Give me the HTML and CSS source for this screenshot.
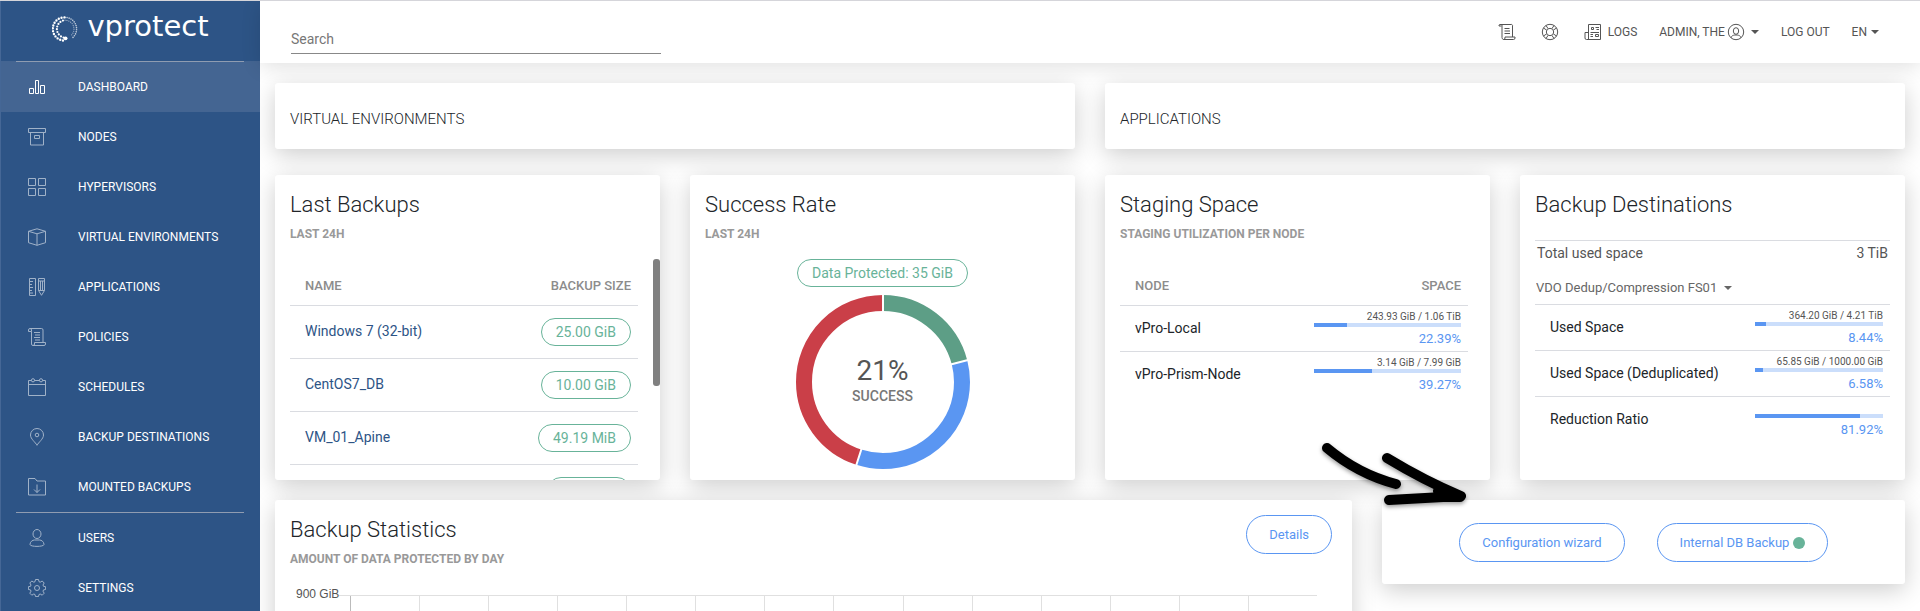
FILE: index.html
```html
<!DOCTYPE html>
<html lang="en">
<head>
<meta charset="utf-8">
<title>vProtect Dashboard</title>
<link rel="stylesheet" href="styles.css">
</head>
<body>
<div class="app">
  <aside class="sidebar">
    <a class="brand" href="#">
      <svg class="brand-mark" viewBox="0 0 26 26" aria-hidden="true">
        <g fill="none" stroke="#fff" stroke-linecap="round">
          <path d="M11 24.500A11.600 11.600 0 0 1 13 1.400" stroke-width="2.400" stroke-dasharray="0 2.900"/>
          <path d="M13 1.400A11.600 11.600 0 0 1 19.500 22.600" stroke-width="1.600" stroke-dasharray="0 2.100" opacity=".7"/>
          <path d="M11.500 21.500A8.800 8.800 0 0 1 13 4.200" stroke-width="2.200" stroke-dasharray="0 2.800"/>
          <path d="M13 4.200A8.800 8.800 0 0 1 18.500 20" stroke-width="1.200" stroke-dasharray="0 2" opacity=".6"/>
          <path d="M13.500 22.300h.1" stroke-width="3.800"/>
        </g>
      </svg>
      <span class="brand-name">vprotect</span>
    </a>
    <nav>
      <ul class="menu">
        <li class="menu-item group-start active"><a href="#">
          <svg class="icon" viewBox="0 0 18 18"><path d="M1.500 10.500h4v5h-4zM7.500 2.500h3v13h-3zM12.500 7.500h4v8h-4z"/></svg>DASHBOARD</a></li>
        <li class="menu-item"><a href="#">
          <svg class="icon" viewBox="0 0 18 18"><path d="M.5.500h17v4H.5zM2.500 4.500v12.500h13V4.500M6.500 7.500h5v3h-5z"/></svg>NODES</a></li>
        <li class="menu-item"><a href="#">
          <svg class="icon" viewBox="0 0 18 18"><path d="M.5.500h7v7h-7zM10.500.500h7v7h-7zM.5 10.500h7v7h-7zM10.500 10.500h7v7h-7z"/></svg>HYPERVISORS</a></li>
        <li class="menu-item"><a href="#">
          <svg class="icon" viewBox="0 0 18 18"><path d="M9 .8l8.500 2.500v11.400L9 17.300.5 14.700V3.300zM.5 3.300L9 5.800l8.500-2.500M9 5.800v11.500"/></svg>VIRTUAL ENVIRONMENTS</a></li>
        <li class="menu-item"><a href="#">
          <svg class="icon" viewBox="0 0 18 18"><path d="M1.500.500h6v17h-6zM2 3.500h3M2 6.500h2M2 9.500h3M2 12.500h2M2 15h3M10.500.500h6v12l-3 4.800-3-4.800zM10.500 3h6M12.500 3v9.500M14.500 3v9.500M10.500 12.500h6"/></svg>APPLICATIONS</a></li>
        <li class="menu-item"><a href="#">
          <svg class="icon" viewBox="0 0 18 18"><path d="M2 .500h11.500a1.500 1.500 0 0 1 1.500 1.500v12.500M2 .500A1.500 1.500 0 0 0 .5 2v1.500h3V2A1.500 1.500 0 0 0 2 .500M3.500 3.500V16A1.500 1.500 0 0 0 5 17.500h11a1.500 1.500 0 0 0 1.500-1.500v-1.500H6.500V16A1.500 1.500 0 0 1 5 17.500M6 4.500h6M7 7h5M6 9.500h6M7 12h5"/></svg>POLICIES</a></li>
        <li class="menu-item"><a href="#">
          <svg class="icon" viewBox="0 0 18 18"><path d="M3.500 2.500h-3v15h17v-15h-3M6.500 2.500h5M.5 6.500h17"/><circle cx="5" cy="2.300" r="1.600"/><circle cx="13" cy="2.300" r="1.600"/></svg>SCHEDULES</a></li>
        <li class="menu-item"><a href="#">
          <svg class="icon" viewBox="0 0 18 18"><path d="M9 17.300C7.500 14.300 2.500 11 2.500 7a6.500 6.500 0 0 1 13 0c0 4-5 7.300-6.500 10.300z"/><circle cx="9" cy="7" r="1.800"/></svg>BACKUP DESTINATIONS</a></li>
        <li class="menu-item"><a href="#">
          <svg class="icon" viewBox="0 0 18 18"><path d="M.5.500h6.500l2 2.500h8.500v14H.5zM9 6.500v8M6 11.500l3 3 3-3"/></svg>MOUNTED BACKUPS</a></li>
        <li class="menu-item group-start"><a href="#">
          <svg class="icon" viewBox="0 0 18 18"><ellipse cx="9" cy="5" rx="4" ry="4.500"/><path d="M2 15.500c0-2.800 2.600-4.500 4.500-4.500h5c1.900 0 4.500 1.700 4.500 4.500 0 2.500-14 2.500-14 0z"/></svg>USERS</a></li>
        <li class="menu-item"><a href="#">
          <svg class="icon" viewBox="0 0 18 18"><path d="M7.500.500h3l.5 2.200 1.200.5 2-1.200 2 2-1.200 2 .5 1.300 2.100.4v2.800l-2.100.4-.5 1.300 1.200 2-2 2-2-1.200-1.200.5-.5 2.100h-3L7 15.500l-1.200-.5-2 1.200-2-2 1.200-2-.5-1.300-2.100-.4V7.700l2.100-.4L3 6 1.800 4l2-2 2 1.200L7 2.700z"/><circle cx="9" cy="9" r="2.500"/></svg>SETTINGS</a></li>
      </ul>
    </nav>
  </aside>

  <div class="page">
    <header class="topbar">
      <input class="search" type="search" placeholder="Search" aria-label="Search">
      <nav class="tools">
        <a class="tool" href="#" aria-label="Policies">
          <svg class="icon" viewBox="0 0 18 18"><path d="M2 1.500h11a1.200 1.200 0 0 1 1.500 1.500v11M2 1.500A1.200 1.200 0 0 0 1 3h2.500M4 2v12.500A2 2 0 0 0 5.500 16.500h10a1.500 1.500 0 0 0 1.500-1.500v-1H7v1a1.500 1.500 0 0 1-1.500 1.500M6.500 5.500h5M6.500 8h5.500M6.500 10.500h5.500"/></svg></a>
        <a class="tool" href="#" aria-label="Support">
          <svg class="icon" viewBox="0 0 18 18"><circle cx="9" cy="9" r="7.700"/><circle cx="9" cy="9" r="3.700"/><path d="M5 2.500l2 3M2.500 5l3 2M13 2.500l-2 3M15.500 5l-3 2M5 15.500l2-3M2.500 13l3-2M13 15.500l-2-3M15.500 13l-3-2"/></svg></a>
        <a class="tool" href="#">
          <svg class="icon" viewBox="0 0 18 18"><path d="M4.500 16.500v-15h12v15h-14A1.500 1.500 0 0 1 1 15V9.500h3.500M7.500 4.500h2v2h-2zM11.500 11.500h3v2h-3zM11.500 4.500H15M12.500 6.500H15M6.500 9.500H15M6.500 11.500H9M6.500 13.500H9"/></svg>LOGS</a>
        <button class="tool user" type="button">ADMIN, THE<svg class="icon" viewBox="0 0 18 18"><circle cx="9" cy="9" r="7.700"/><ellipse cx="9" cy="8" rx="2.700" ry="3.300"/><path d="M4 14.800c.5-2 2-2.500 3.800-2.800h2.400c1.800.3 3.300.8 3.800 2.800"/></svg><span class="caret"></span></button>
        <a class="tool" href="#">LOG OUT</a>
        <button class="tool lang" type="button">EN<span class="caret"></span></button>
      </nav>
    </header>

    <main class="content">
      <div class="row halves">
        <section class="card banner"><h2>VIRTUAL ENVIRONMENTS</h2></section>
        <section class="card banner"><h2>APPLICATIONS</h2></section>
      </div>

      <div class="row quarters">
        <section class="card">
          <h2 class="title">Last Backups</h2>
          <p class="subtitle">LAST 24H</p>
          <div class="scroller">
            <table class="list">
              <thead><tr><th>NAME</th><th class="end">BACKUP SIZE</th></tr></thead>
              <tbody>
                <tr><td><a href="#">Windows 7 (32-bit)</a></td><td class="end"><span class="pill">25.00 GiB</span></td></tr>
                <tr><td><a href="#">CentOS7_DB</a></td><td class="end"><span class="pill">10.00 GiB</span></td></tr>
                <tr><td><a href="#">VM_01_Apine</a></td><td class="end"><span class="pill">49.19 MiB</span></td></tr>
                <tr><td></td><td class="end"><span class="pill empty"></span></td></tr>
              </tbody>
            </table>
            <span class="thumb"></span>
          </div>
        </section>

        <section class="card">
          <h2 class="title">Success Rate</h2>
          <p class="subtitle">LAST 24H</p>
          <div class="rate">
            <span class="pill">Data Protected: 35 GiB</span>
            <div class="donut">
              <svg viewBox="0 0 174 174" aria-hidden="true">
                <g fill="none" stroke-width="16" transform="rotate(-90 87 87)">
                  <circle cx="87" cy="87" r="79" pathLength="100" stroke="#5d9e86" stroke-dasharray="21 79"/>
                  <circle cx="87" cy="87" r="79" pathLength="100" stroke="#5a96f2" stroke-dasharray="34 66" stroke-dashoffset="-21"/>
                  <circle cx="87" cy="87" r="79" pathLength="100" stroke="#ca3f48" stroke-dasharray="45 55" stroke-dashoffset="-55"/>
                </g>
                <path d="M87 87V0M87 87l85-22M87 87l-27 84" stroke="#fff" stroke-width="2"/>
              </svg>
              <div class="donut-text"><strong>21%</strong><span>SUCCESS</span></div>
            </div>
          </div>
        </section>

        <section class="card">
          <h2 class="title">Staging Space</h2>
          <p class="subtitle">STAGING UTILIZATION PER NODE</p>
          <table class="list">
            <thead><tr><th>NODE</th><th class="end">SPACE</th></tr></thead>
            <tbody>
              <tr><td>vPro-Local</td><td class="usage"><small>243.93 GiB / 1.06 TiB</small><div class="bar"><div class="fill" style="width:22.39%"></div></div><span>22.39%</span></td></tr>
              <tr><td>vPro-Prism-Node</td><td class="usage"><small>3.14 GiB / 7.99 GiB</small><div class="bar"><div class="fill" style="width:39.27%"></div></div><span>39.27%</span></td></tr>
            </tbody>
          </table>
        </section>

        <section class="card">
          <h2 class="title">Backup Destinations</h2>
          <div class="total"><span>Total used space</span><span>3 TiB</span></div>
          <div class="chooser">
            <select aria-label="Backup destination"><option>VDO Dedup/Compression FS01</option></select><span class="caret"></span>
          </div>
          <table class="list wide">
            <tbody>
              <tr><td>Used Space</td><td class="usage"><small>364.20 GiB / 4.21 TiB</small><div class="bar"><div class="fill" style="width:8.44%"></div></div><span>8.44%</span></td></tr>
              <tr><td>Used Space (Deduplicated)</td><td class="usage"><small>65.85 GiB / 1000.00 GiB</small><div class="bar"><div class="fill" style="width:6.58%"></div></div><span>6.58%</span></td></tr>
              <tr><td>Reduction Ratio</td><td class="usage"><small></small><div class="bar"><div class="fill" style="width:81.92%"></div></div><span>81.92%</span></td></tr>
            </tbody>
          </table>
        </section>
      </div>

      <div class="row stats">
        <section class="card">
          <div class="card-head">
            <div>
              <h2 class="title">Backup Statistics</h2>
              <p class="subtitle">AMOUNT OF DATA PROTECTED BY DAY</p>
            </div>
            <button class="btn" type="button">Details</button>
          </div>
          <div class="chart">
            <span class="axis-label">900 GiB</span>
            <div class="plot">
              <i class="tick"></i><i></i><i></i><i></i><i></i><i></i><i></i><i></i><i></i><i></i><i></i><i></i><i></i><i></i><i></i>
            </div>
          </div>
        </section>
        <section class="card actions">
          <button class="btn" type="button">Configuration wizard</button>
          <button class="btn" type="button">Internal DB Backup <span class="dot"></span></button>
          <svg class="pointer" viewBox="0 0 150 72" aria-hidden="true">
            <g fill="none" stroke="#000" stroke-width="10" stroke-linecap="round" stroke-linejoin="round">
              <path d="M7 8Q38 34 76 44"/>
              <path d="M67 18Q105 41 141 56L69 60"/>
              <path d="M118 51l22 6-16 0"/>
            </g>
          </svg>
        </section>
      </div>
    </main>
  </div>
</div>
</body>
</html>
```

FILE: styles.css
```css
* { box-sizing: border-box; }

body {
  margin: 0;
  font: 14px/20px Roboto, "Liberation Sans", sans-serif;
  color: #212529;
  background: #fff;
}

h2, p, ul { margin: 0; padding: 0; }
a { color: inherit; text-decoration: none; }
button, input, select { font: inherit; color: inherit; background: none; border: 0; padding: 0; margin: 0; }

.app {
  display: flex;
  height: 100vh;
  overflow: hidden;
  border-top: 1px solid #d5d5da;
}

/* Sidebar */
.sidebar {
  flex: 0 0 260px;
  background: #2d5486;
  border-left: 1px solid #456796;
  color: #fff;
}
.brand {
  display: flex;
  align-items: center;
  justify-content: center;
  gap: 9px;
  height: 60px;
  padding-bottom: 4px;
}
.brand-mark { width: 26px; height: 26px; }
.brand-name { font: 29px/30px "DejaVu Sans", sans-serif; padding-bottom: 6px; }
.menu { list-style: none; }
.menu-item a {
  display: flex;
  align-items: center;
  gap: 32px;
  height: 50px;
  padding-left: 27px;
  font-size: 12px;
}
.menu-item.active { background: #446592; }
.group-start::before {
  content: "";
  display: block;
  height: 1px;
  margin: 0 16px 0 15px;
  background: #8f9cb1;
}
.icon {
  width: 18px;
  height: 18px;
  flex: none;
  fill: none;
  stroke: currentColor;
  stroke-width: 1;
}
.menu-item .icon { opacity: .55; }
.menu-item.active .icon { opacity: 1; }

/* Top bar */
.page { flex: 1; min-width: 0; display: flex; flex-direction: column; }
.topbar {
  display: flex;
  justify-content: space-between;
  height: 62px;
  flex: none;
  padding: 0 41px 0 31px;
  background: #fff;
  box-shadow: 0 4px 20px rgba(0, 0, 0, .12);
}
.search {
  width: 370px;
  height: 30px;
  margin-top: 23px;
  border-bottom: 1px solid #888;
  appearance: none;
  outline: 0;
}
.search::placeholder { color: #777; opacity: 1; }
.tools { display: flex; align-items: center; gap: 22px; color: #555; font-size: 12px; }
.tool { display: flex; align-items: center; gap: 6px; }
.tool:nth-child(-n+2) { width: 21px; }
.tool.user { gap: 2px; }
.tool.user .caret { margin-left: 4px; }
.tool.lang { gap: 4px; }
.caret {
  border: 4px solid transparent;
  border-top-color: currentColor;
  border-bottom: 0;
}

/* Cards */
.content { flex: 1; min-height: 0; overflow: hidden; padding: 20px 15px; }
.row { display: grid; gap: 30px; }
.halves { grid-template-columns: repeat(2, 1fr); margin-bottom: 26px; }
.quarters { grid-template-columns: repeat(4, 1fr); margin-bottom: 20px; }
.stats { grid-template-columns: 1077fr 523fr; align-items: start; }
.card {
  display: flex;
  flex-direction: column;
  min-width: 0;
  padding: 15px 15px 11px;
  background: #fff;
  border-radius: 3px;
  box-shadow: 0 6px 24px rgba(0, 0, 0, .2);
}
.banner { padding: 26px 15px 20px; }
.banner h2 { font-size: 15px; line-height: 20px; font-weight: 300; }
.title { font-size: 22px; line-height: 30px; font-weight: 300; }
.subtitle { margin: 5px 0 16px; font-size: 12px; line-height: 18px; font-weight: 700; color: #999; }

.list { width: calc(100% - 7px); border-spacing: 0; }
.list.wide { width: 100%; }
.list th {
  padding: 18px 7px 10px 15px;
  line-height: 18px;
  font-size: 13px;
  font-weight: 500;
  color: #8c8c8c;
  text-align: left;
}
.list td { padding: 0 7px 2px 15px; border-top: 1px solid #dadce1; }
.list a { color: #2d5486; }
.list .end { text-align: right; }
.list td.end { height: 53px; padding-bottom: 0; }
.pill {
  display: inline-block;
  vertical-align: middle;
  height: 28px;
  padding: 0 14px;
  border: 1px solid #68b399;
  border-radius: 14px;
  line-height: 26px;
  color: #68b399;
}
.pill.empty { width: 84px; }
.scroller { position: relative; flex: 1 1 0; min-height: 0; margin: 0 -15px -11px 0; padding-right: 15px; overflow: hidden; }
.thumb {
  position: absolute;
  top: 0;
  right: 0;
  width: 7px;
  height: 127px;
  border-radius: 3px;
  background: #808080;
}

.list td.usage { width: 169px; padding: 5px 7px 4px 15px; text-align: right; }
.list.wide td.usage { width: 150px; }
.usage small { display: block; height: 12px; font-size: 10px; line-height: 12px; color: #555; white-space: nowrap; }
.usage span { display: block; margin-top: 4px; font-size: 13px; line-height: 16px; color: #5a96f2; }
.bar { height: 4px; background: #cbdefb; }
.fill { height: 4px; background: #5a96f2; }

.rate { display: flex; flex-direction: column; align-items: center; gap: 8px; }
.donut { display: grid; place-items: center; width: 174px; }
.donut > * { grid-area: 1 / 1; }
.donut svg { display: block; width: 100%; }
.donut-text { display: flex; flex-direction: column; align-items: center; padding-bottom: 3px; color: #777; font-weight: 500; }
.donut-text strong { font-size: 28px; line-height: 30px; font-weight: 400; color: #555; }

.total {
  display: flex;
  justify-content: space-between;
  margin-top: 20px;
  padding: 2px;
  border-top: 1px solid #dadce1;
  color: #555;
}
.chooser { display: flex; align-items: center; gap: 6px; height: 32px; margin-top: 7px; padding-left: 1px; color: #666; font-size: 13px; }
.chooser select { appearance: none; }

/* Statistics */
.card-head { display: flex; justify-content: space-between; align-items: flex-start; padding-right: 5px; }
.btn {
  height: 39px;
  padding: 0 22px;
  border: 1px solid #5a96f2;
  border-radius: 20px;
  font-size: 13px;
  color: #5a96f2;
  white-space: nowrap;
}
.chart { display: flex; padding: 0 20px 20px 6px; }
.axis-label { width: 43px; font: 12px/20px "Liberation Sans", sans-serif; color: #555; white-space: nowrap; }
.plot { flex: 1; display: grid; grid-template-columns: 11px repeat(14, 1fr); height: 260px; margin-top: 11px; border-top: 1px solid #e0e0e0; }
.plot i { border-left: 1px solid #e0e0e0; }
.plot i.tick { border: 0; }
.plot i.tick + i { border-color: #bbb; }

.actions {
  position: relative;
  flex-direction: row;
  flex-wrap: wrap;
  justify-content: center;
  gap: 32px;
  padding: 23px 15px 22px;
}
.dot { display: inline-block; width: 12px; height: 12px; border-radius: 50%; background: #68b399; vertical-align: -2px; }
.pointer {
  position: absolute;
  left: -62px;
  top: -60px;
  width: 150px;
  height: 72px;
  filter: drop-shadow(0 2px 2px rgba(0, 0, 0, .4));
}
```
